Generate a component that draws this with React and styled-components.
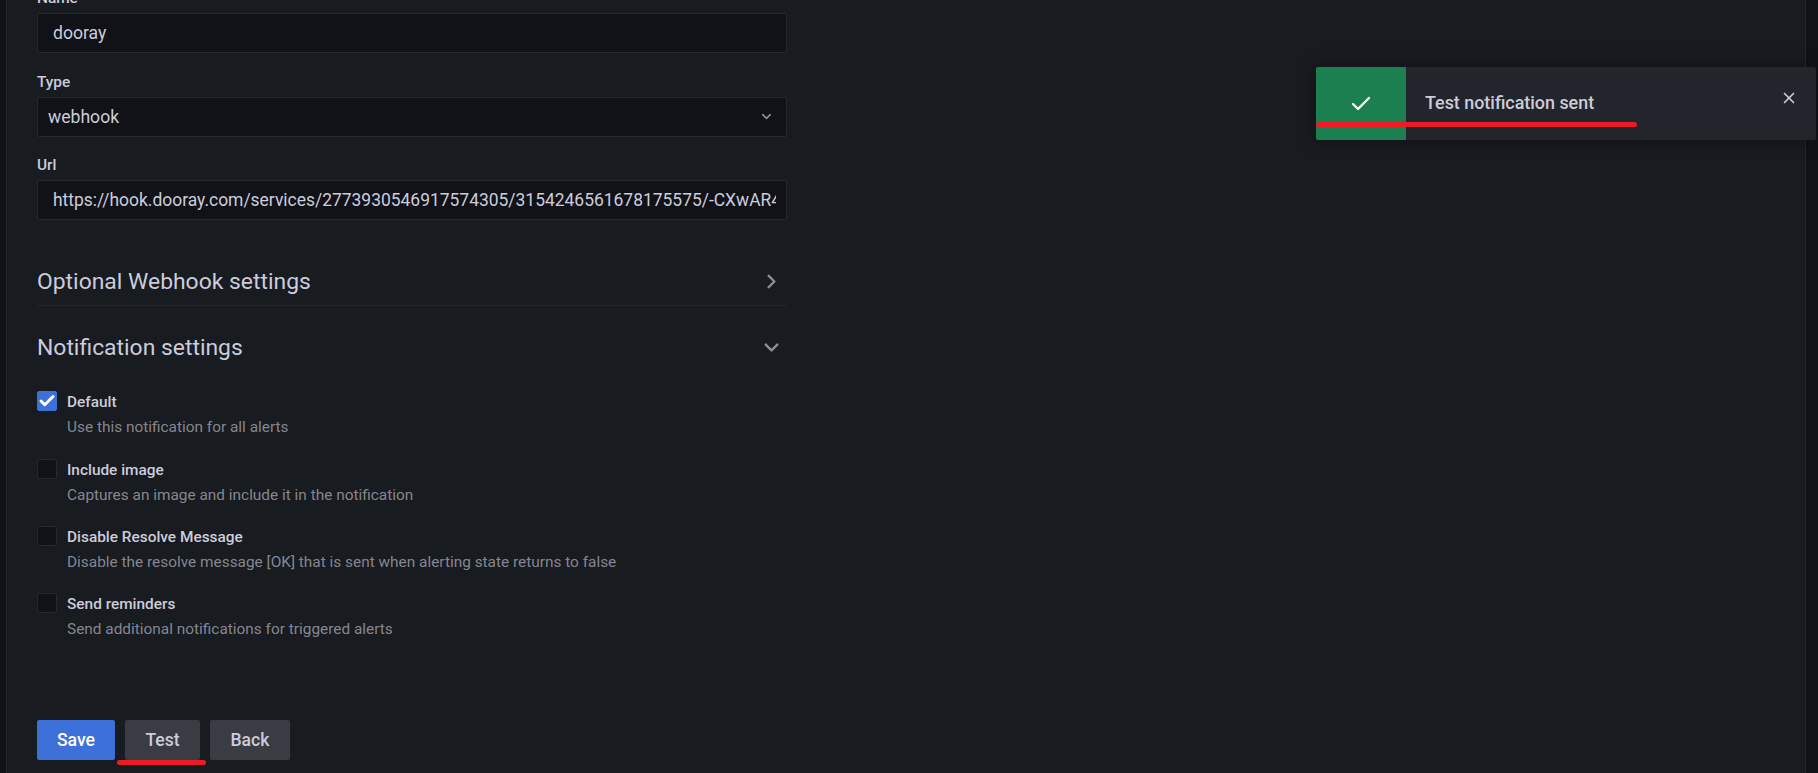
import React from "react";
import styled, { createGlobalStyle } from "styled-components";
import { Check, ChevronDown, ChevronRight, X } from "lucide-react";

const GlobalStyle = createGlobalStyle`
  html, body {
    margin: 0;
    padding: 0;
    background: #111217;
    overflow: hidden;
  }
  * {
    box-sizing: border-box;
  }
`;

const Page = styled.div`
  position: relative;
  width: 1818px;
  height: 773px;
  overflow: hidden;
  display: flex;
  padding-left: 6px;
  background: #111217;
  font-family: Roboto, "Liberation Sans", sans-serif;
  color: #ccccdc;
`;

const Panel = styled.div`
  flex: 1;
  height: 773px;
  background: #181b1f;
  padding: 0 0 0 30px;
  margin-right: 12px;
  border-left: 1px solid #22252b;
  border-right: 1px solid #22252b;
`;

const Form = styled.div`
  width: 750px;
  margin-top: -13.7px;
`;

const Field = styled.div`
  margin-bottom: 16.5px;
`;

const Label = styled.div`
  font-size: 15.4px;
  font-weight: 500;
  line-height: 24px;
  height: 24px;
  margin-bottom: 3px;
`;

const Input = styled.div`
  height: 40px;
  background: #111217;
  border: 1px solid #26292f;
  border-radius: 2px;
  padding: 0 ${(p) => (p.$select ? "12px 0 10px" : "10px 0 15px")};
  display: flex;
  align-items: center;
  justify-content: space-between;
  font-size: 17.6px;
  white-space: nowrap;
  svg {
    color: #8e8e98;
    flex: none;
  }
`;

const InputText = styled.span`
  flex: 1;
  min-width: 0;
  overflow: hidden;
  font-size: ${(p) => p.$size || 17.6}px;
`;

const SectionHead = styled.div`
  height: ${(p) => p.$h}px;
  padding: ${(p) => p.$pad || 0}px 4px 0 0;
  display: flex;
  align-items: center;
  justify-content: space-between;
  font-size: 22.9px;
  border-bottom: ${(p) => (p.$line ? "1px solid #22252b" : "none")};
  svg {
    color: #8e8e98;
  }
`;

const Options = styled.div`
  margin-top: 1.5px;
`;

const Option = styled.div`
  display: flex;
  gap: 10px;
  height: 67.3px;
`;

const Box = styled.div`
  width: 20px;
  height: 20px;
  flex: none;
  border-radius: 2px;
  background: ${(p) => (p.$on ? "#3d71d9" : "#111217")};
  border: 1px solid ${(p) => (p.$on ? "#3d71d9" : "#26292f")};
  display: flex;
  align-items: center;
  justify-content: center;
  color: #fff;
`;

const OptionTitle = styled.div`
  font-size: 15.4px;
  font-weight: 500;
  line-height: 22px;
`;

const OptionDesc = styled.div`
  font-size: 15.4px;
  line-height: 22px;
  margin-top: 3px;
  color: rgba(204, 204, 220, 0.62);
`;

const Actions = styled.div`
  display: flex;
  gap: 10px;
  margin-top: 59px;
`;

const Button = styled.div`
  height: 40px;
  width: ${(p) => p.$w}px;
  border-radius: 2px;
  display: flex;
  align-items: center;
  justify-content: center;
  font-size: 17.6px;
  font-weight: 500;
  background: ${(p) => (p.$primary ? "#3d71d9" : "#393c43")};
  color: ${(p) => (p.$primary ? "#fff" : "#ccccdc")};
`;

const Toast = styled.div`
  position: absolute;
  top: 67px;
  left: 1316px;
  width: 500px;
  height: 73px;
  display: flex;
  background: #22252b;
  border-radius: 2px;
  box-shadow: 0 0 20px rgba(0, 0, 0, 0.35);
`;

const ToastIcon = styled.div`
  width: 90px;
  background: #1b7f4f;
  display: flex;
  align-items: center;
  justify-content: center;
  color: #fff;
  border-radius: 2px 0 0 2px;
`;

const ToastText = styled.div`
  flex: 1;
  padding: 24px 0 0 19px;
  font-size: 17.9px;
  font-weight: 500;
  line-height: 24px;
`;

const ToastClose = styled.div`
  position: absolute;
  top: 22px;
  right: 18px;
  display: flex;
  color: #ccccdc;
`;

// red marker strokes drawn over the screenshot
const Marker = styled.div`
  position: absolute;
  left: ${(p) => p.$x}px;
  top: ${(p) => p.$y}px;
  width: ${(p) => p.$w}px;
  height: 5px;
  border-radius: 3px;
  background: #ed1c24;
`;

const options = [
  { title: "Default", desc: "Use this notification for all alerts", on: true },
  { title: "Include image", desc: "Captures an image and include it in the notification" },
  { title: "Disable Resolve Message", desc: "Disable the resolve message [OK] that is sent when alerting state returns to false" },
  { title: "Send reminders", desc: "Send additional notifications for triggered alerts" },
];

const App = () => {
  return (
    <Page>
      <GlobalStyle />
      <Panel>
        <Form>
          <Field>
            <Label>Name</Label>
            <Input>
              <InputText>dooray</InputText>
            </Input>
          </Field>
          <Field>
            <Label>Type</Label>
            <Input $select>
              webhook
              <ChevronDown size={15} strokeWidth={2.5} />
            </Input>
          </Field>
          <Field>
            <Label>Url</Label>
            <Input>
              <InputText $size={17.45}>https://hook.dooray.com/services/2773930546917574305/3154246561678175575/-CXwAR4</InputText>
            </Input>
          </Field>
          <SectionHead $h={69} $pad={21} $line>
            Optional Webhook settings
            <ChevronRight size={23} strokeWidth={2.5} />
          </SectionHead>
          <SectionHead $h={84}>
            Notification settings
            <ChevronDown size={23} strokeWidth={2.5} />
          </SectionHead>
          <Options>
            {options.map((o) => (
              <Option key={o.title}>
                <Box $on={o.on}>{o.on && <Check size={20} strokeWidth={4} />}</Box>
                <div>
                  <OptionTitle>{o.title}</OptionTitle>
                  <OptionDesc>{o.desc}</OptionDesc>
                </div>
              </Option>
            ))}
          </Options>
          <Actions>
            <Button $primary $w={78}>Save</Button>
            <Button $w={75}>Test</Button>
            <Button $w={80}>Back</Button>
          </Actions>
        </Form>
      </Panel>
      <Toast>
        <ToastIcon>
          <Check size={24} strokeWidth={2.4} />
        </ToastIcon>
        <ToastText>Test notification sent</ToastText>
        <ToastClose>
          <X size={18} strokeWidth={2.2} />
        </ToastClose>
      </Toast>
      <Marker $x={1316} $y={122} $w={321} />
      <Marker $x={117} $y={760} $w={89} />
    </Page>
  );
};

export default App;
